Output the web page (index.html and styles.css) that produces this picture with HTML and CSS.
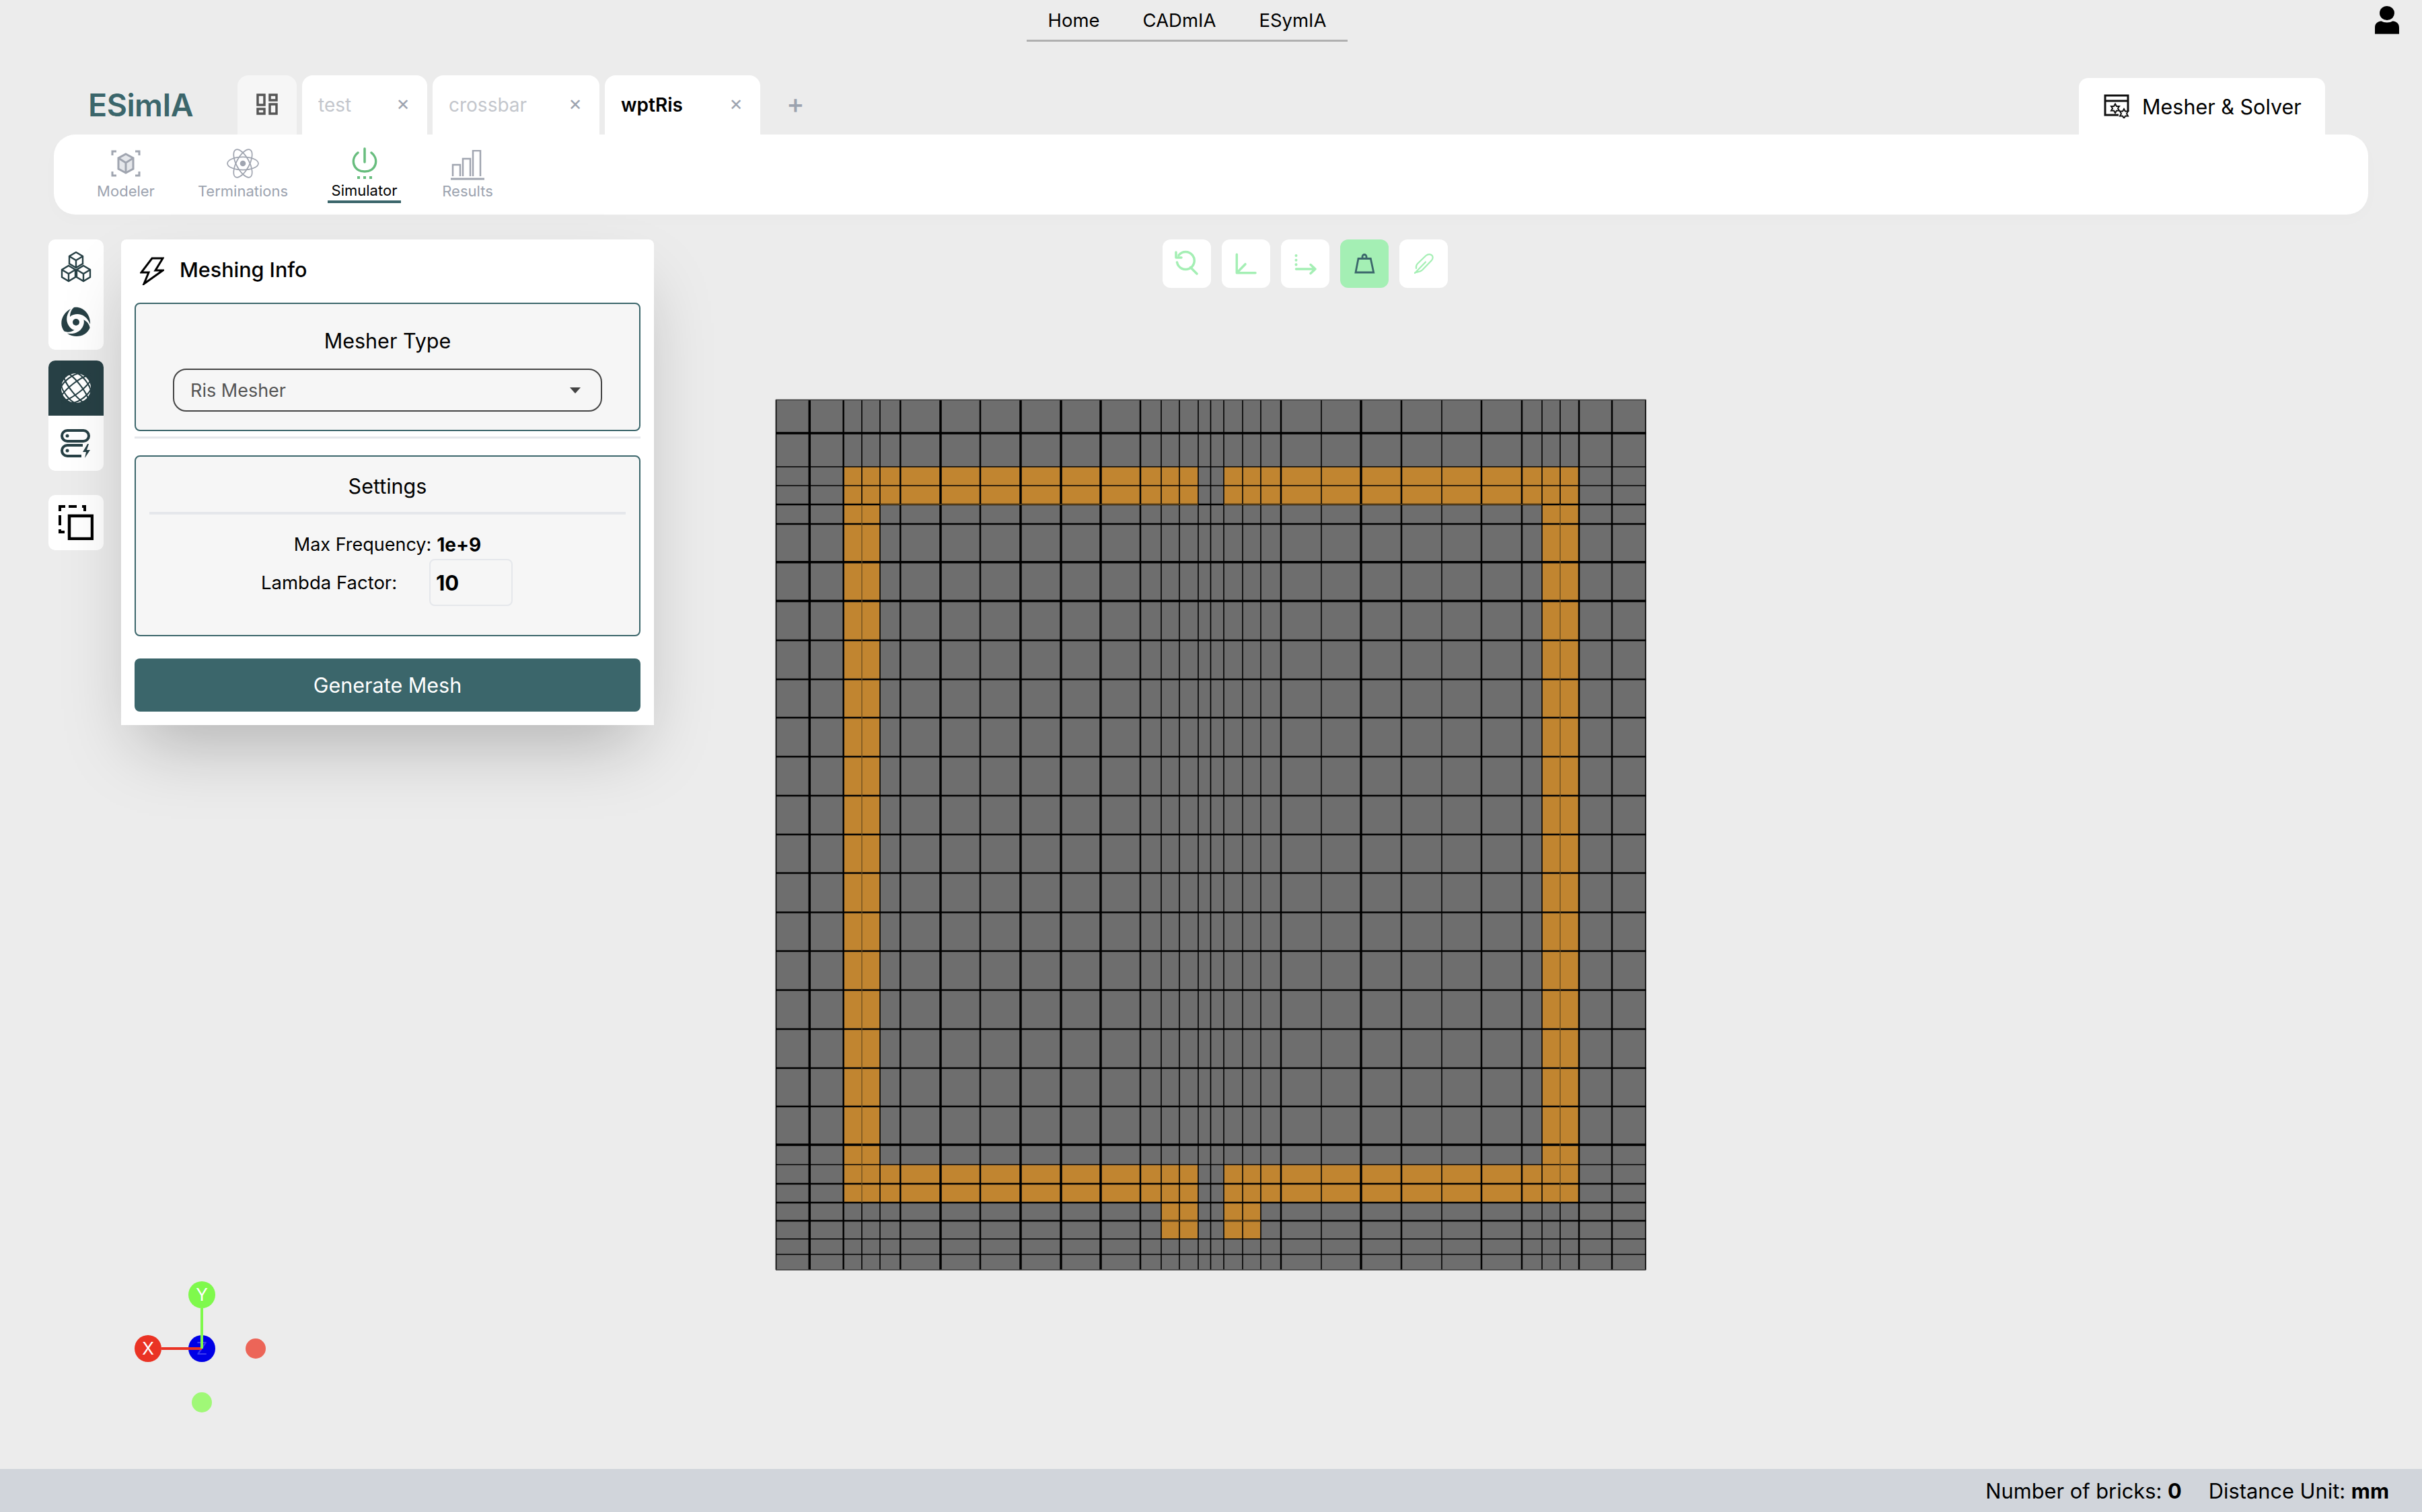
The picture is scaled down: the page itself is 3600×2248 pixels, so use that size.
FILE: index.html
```html
<!DOCTYPE html>
<html lang="en">
<head>
<meta charset="utf-8">
<title>ESimIA</title>
<link rel="stylesheet" href="styles.css">
</head>
<body>
<div class="app">
  <header class="topbar">
    <nav class="topnav">
      <a class="topnav-item">Home</a>
      <a class="topnav-item">CADmIA</a>
      <a class="topnav-item">ESymIA</a>
    </nav>
    <svg class="user-icon" viewBox="0 0 36 42"><ellipse cx="18" cy="10.5" rx="11" ry="10.5"/><path d="M0 41.5V32C0 25 5 22.500 10 22.500C13 25 23 25 26 22.500C31 22.500 36 25 36 32V41.500Z"/></svg>
  </header>

  <div class="tabrow">
    <div class="logo">ESimIA</div>
    <div class="tabs">
      <div class="tab tab-home">
        <svg class="tab-home-icon" viewBox="0 0 32 32"><path d="M2 2H12V17H2ZM20 2H30V10H20ZM2 23H12V30H2ZM20 16H30V30H20Z"/></svg>
      </div>
      <div class="tab tab-test"><span class="tab-name">test</span><span class="tab-x">✕</span></div>
      <div class="tab tab-crossbar"><span class="tab-name">crossbar</span><span class="tab-x">✕</span></div>
      <div class="tab tab-active"><span class="tab-name">wptRis</span><span class="tab-x">✕</span></div>
      <div class="tab-add">+</div>
    </div>
    <div class="solver-tab">
      <svg class="solver-icon" viewBox="0 0 38 36"><path class="solver-frame" d="M36 26V2H2V31H22M2 10H36"/><path class="solver-gear" d="M17 14.500L19 18H23L21 21L23 24.500H19L17 28L15 24.500H11L13 21L11 18H15Z"/><path class="solver-gear" d="M30 22L32 25.500H36L34 29L36 32.500H32L30 36L28 32.500H24L26 29L24 25.500H28Z"/></svg>
      <span>Mesher &amp; Solver</span>
    </div>
  </div>

  <div class="modebar">
    <div class="mode mode-modeler">
      <svg class="mode-icon" viewBox="-4 0 52 44"><path class="ic-gray" d="M2 10V4H8M42 10V4H36M2 34V40H8M42 34V40H36"/><path class="ic-gray ic-fill" d="M22 8L33 14V30L22 36L11 30V14Z"/><path class="ic-gray" d="M11 14L22 21L33 14M22 21V36"/></svg>
      <span>Modeler</span>
    </div>
    <div class="mode mode-terminations">
      <svg class="mode-icon" viewBox="0 0 52 46"><g class="ic-thin"><ellipse cx="26" cy="23" rx="24" ry="10"/><ellipse cx="26" cy="23" rx="24" ry="10" transform="rotate(62 26 23)"/><ellipse cx="26" cy="23" rx="24" ry="10" transform="rotate(118 26 23)"/></g><circle class="ic-dot" cx="26" cy="23" r="4.500"/></svg>
      <span>Terminations</span>
    </div>
    <div class="mode mode-simulator">
      <svg class="mode-icon sim-icon" viewBox="0 0 40 48"><path class="ic-green" d="M20 2V22M10 8C-2 18 3 36 20 36C37 36 42 18 30 8"/><path class="ic-green-dots" d="M9 45H13M18 45H22M27 45H31"/></svg>
      <span>Simulator</span>
    </div>
    <div class="mode mode-results">
      <svg class="mode-icon results-icon" viewBox="0 0 50 46"><path class="ic-bars" d="M3 39V22H14V39M18 39V13H29V39M33 39V1H44V39"/><path class="ic-base" d="M0 43H50"/></svg>
      <span>Results</span>
    </div>
  </div>

  <main class="workspace">
    <aside class="sidebar">
      <div class="side-group">
        <div class="side-btn">
          <svg class="side-icon" viewBox="0 0 46 46"><g class="ic-dark"><path d="M23 1L33 7V18L23 24L13 18V7ZM13 7L23 13L33 7M23 13V24"/><path d="M12 21L22 27V38L12 44L2 38V27ZM2 27L12 33L22 27M12 33V44"/><path d="M34 21L44 27V38L34 44L24 38V27ZM24 27L34 33L44 27M34 33V44"/></g></svg>
        </div>
        <div class="side-btn">
          <svg class="side-icon" viewBox="-23 -23 46 46"><circle class="ic-dark-fill" r="5"/><g class="ic-dark-fill"><path d="M-3 -22C10 -24 22 -12 21 3C17 -7 10 -12 2 -12C-2 -12 -6 -11 -9 -8C-9 -14 -7 -19 -3 -22Z"/><path d="M-3 -22C10 -24 22 -12 21 3C17 -7 10 -12 2 -12C-2 -12 -6 -11 -9 -8C-9 -14 -7 -19 -3 -22Z" transform="rotate(120)"/><path d="M-3 -22C10 -24 22 -12 21 3C17 -7 10 -12 2 -12C-2 -12 -6 -11 -9 -8C-9 -14 -7 -19 -3 -22Z" transform="rotate(240)"/></g></svg>
        </div>
      </div>
      <div class="side-group side-group-active">
        <div class="side-btn side-btn-active">
          <svg class="side-icon" viewBox="-24 -24 48 48"><circle class="globe-disc" r="23"/><g class="globe-lines"><ellipse rx="31" ry="8" transform="rotate(-38)"/><ellipse rx="31" ry="19" transform="rotate(-38)"/><ellipse rx="8" ry="31" transform="rotate(-38)"/><ellipse rx="19" ry="31" transform="rotate(-38)"/></g></svg>
        </div>
        <div class="side-btn">
          <svg class="side-icon" viewBox="0 0 46 46"><path class="ic-dark-w" d="M10 4H34A6.500 6.500 0 0 1 34 20H10A6.500 6.500 0 0 1 10 4ZM33 26H10A7 7 0 0 0 10 42H31"/><circle class="ic-dark-fill" cx="10" cy="12" r="2.500"/><circle class="ic-dark-fill" cx="10" cy="34" r="2.500"/><path class="ic-dark-fill" d="M40 24L33 36H38L36 45L44 33H39L42 24Z"/></svg>
        </div>
      </div>
      <div class="side-group side-group-last">
        <div class="side-btn">
          <svg class="copy-icon" viewBox="0 0 52 52"><path class="copy-solid" d="M16 16H50V50H16Z"/><path class="copy-dash" d="M10 2H2V9M15 2H27M35 2H39V9M2 15V30M2 36V40H9"/></svg>
        </div>
      </div>
    </aside>

    <section class="panel">
      <div class="panel-head">
        <svg class="bolt-icon" viewBox="0 0 36 42"><path d="M18 2H34L23 20H34L6 40L13 23H2Z"/></svg>
        <h2 class="panel-title">Meshing Info</h2>
      </div>
      <div class="box box-type">
        <div class="box-title">Mesher Type</div>
        <div class="select">
          <span>Ris Mesher</span>
          <span class="select-arrow"></span>
        </div>
      </div>
      <div class="panel-rule"></div>
      <div class="box box-settings">
        <div class="box-title box-title-rule">Settings</div>
        <div class="freq-row"><span>Max Frequency:</span><b>1e+9</b></div>
        <div class="lambda-row"><label for="lambda">Lambda Factor:</label><input id="lambda" class="lambda-input" value="10"></div>
      </div>
      <button class="generate">Generate Mesh</button>
    </section>

    <div class="view-tools">
      <div class="tool"><svg viewBox="0 0 72 72"><path class="tool-stroke" d="M21.500 34A13 13 0 1 0 24 23.500M20 19V27H28M41.500 41.500L51 51"/></svg></div>
      <div class="tool"><svg viewBox="0 0 72 72"><path class="tool-stroke" d="M22.300 22.300V49.700H50M22.300 49.700L35 36.700"/></svg></div>
      <div class="tool"><svg viewBox="0 0 72 72"><path class="tool-stroke" d="M22.500 44H51M44 37.500L51 44L44 50.500"/><path class="tool-dots" d="M22.500 24V24.100M22.500 30.700V30.800M22.500 37.300V37.400"/></svg></div>
      <div class="tool tool-active"><svg viewBox="0 0 72 72"><path class="tool-weight" d="M27 28.500H45.300L49.700 49H23ZM33 28V25.500A3 3 0 0 1 39 25.500V28"/></svg></div>
      <div class="tool"><svg viewBox="0 0 72 72"><path class="tool-thin" d="M23 50L39 33.500M23 49.500C27 48 31 48.500 34 45.500L48 31C50.500 28 50 24.500 47.500 23C45 21.500 42 22 39.500 24L27 36C25 38 24.500 40 25 43"/></svg></div>
    </div>

    <svg class="mesh" viewBox="1150 590 1300 1302">
      <rect class="m-gray" x="1153" y="594" width="1293.500" height="1294"/>
      <path class="m-orange" d="M1253.500 694H1781V750H1308V1732H1781V1788H1780V1842H1726V1788H1253.500ZM1819 694H2347V1788H1874V1842H1819V1788H1819V1732H2292V750H1819Z"/>
      <path class="m-line lw-1" d="M1281 594V750M1281 1788V1888M1308 594V1888M1781 594V1888M1799.500 594V1888M1819 594V1888M1964 594V1888M2319 594V750M2319 1788V1888M1726 594V1888M1753 594V1888M1847 594V1888M1874 594V1888M2143 594V1888M2292 594V1888M1153.500 594V1888M2446 594V1888"/>
      <path class="m-line lw-2" d="M1253.700 594V1888M1338.300 594V1888M1457 594V1888M1695 594V1888M2262 594V1888M2347 594V1888M2396 594V1888M1904 594V1888M2083 594V1888M2202 594V1888"/>
      <path class="m-line lw-3" d="M1203.300 594V1888M1398 594V1888M1517 594V1888M1577 594V1888M1636 594V1888M2023 594V1888"/>
      <path class="m-line lw-1" d="M1153 694H2446.500M1153 722H2446.500M1153 1865H2446.500M1153 1842H2446.500M1153 1731.500H2446.500"/>
      <path class="m-line lw-2" d="M1153 750H2446.500M1153 779H2446.500M1153 952H2446.500M1153 1010H2446.500M1153 1067H2446.500M1153 1125H2446.500M1153 1183H2446.500M1153 1240.700H2446.500M1153 1298H2446.500M1153 1356.400H2446.500M1153 1414H2446.500M1153 1472H2446.500M1153 1530H2446.500M1153 1588H2446.500M1153 1645H2446.500M1153 1788H2446.500M1153 1815H2446.500M1153 1760H2446.500"/>
      <path class="m-line lw-3" d="M1153 644H2446.500M1153 835.700H2446.500M1153 893.500H2446.500M1153 1702H2446.500"/>
      <path class="m-edge" d="M1153 594.500H2446.500M1153 1888H2446.500"/>
      <path class="m-orange-line" d="M1281 750V1732M2319 750V1732M1281 1732V1788M2319 1732V1788M1308 750H1781M1819 750H2292M1726 1815H1781M1819 1815H1874"/>
    </svg>

    <svg class="gizmo" viewBox="0 0 280 240">
      <circle class="g-z" cx="120" cy="125" r="20"/>
      <text class="g-label g-label-z" x="120" y="134" text-anchor="middle">Z</text>
      <path class="g-red" d="M60 125H120"/>
      <path class="g-green" d="M120 65V125"/>
      <circle class="g-x" cx="40" cy="125" r="20"/>
      <text class="g-label" x="40" y="134" text-anchor="middle">X</text>
      <circle class="g-y" cx="120" cy="45" r="20"/>
      <text class="g-label" x="120" y="54" text-anchor="middle">Y</text>
      <circle class="g-x-neg" cx="200" cy="125" r="15"/>
      <circle class="g-y-neg" cx="120" cy="205" r="15"/>
    </svg>
  </main>

  <footer class="statusbar">
    <span>Number of bricks: <b>0</b></span>
    <span>Distance Unit: <b>mm</b></span>
  </footer>
</div>
</body>
</html>
```
FILE: styles.css
```css
* { box-sizing: border-box; }
html, body { margin: 0; height: 100%; }
body {
  background: #ececec;
  color: #000;
  font-family: Inter, "Liberation Sans", sans-serif;
  overflow: hidden;
}
.app {
  position: relative;
  width: 3600px;
  height: 2248px;
  display: flex;
  flex-direction: column;
}

/* top nav */
.topbar {
  height: 112px;
  display: flex;
  justify-content: center;
  align-items: flex-start;
  position: relative;
  flex: none;
  padding-right: 71px;
}
.topnav {
  display: flex;
  height: 62px;
  padding: 0 32px;
  gap: 64px;
  border-bottom: 3px solid #b0b0b0;
  align-items: center;
  font-size: 27.500px;
}
.topnav-item { color: #000; }
.user-icon {
  position: absolute;
  left: 3530px;
  top: 9px;
  width: 36px;
  height: 42px;
  fill: #000;
}

/* tab row */
.tabrow {
  height: 88px;
  flex: none;
  display: flex;
  align-items: flex-end;
  padding-left: 131px;
}
.logo {
  width: 222px;
  height: 88px;
  font-size: 46.500px;
  font-weight: 600;
  line-height: 88px;
  color: #3b666b;
  letter-spacing: -0.5px;
}
.tabs { display: flex; gap: 8px; height: 88px; align-items: stretch; }
.tab {
  display: flex;
  align-items: center;
  background: #fff;
  border-radius: 16px 16px 0 0;
  font-size: 28px;
  color: #c3c6cc;
}
.tab-home { width: 88px; background: #f6f6f6; justify-content: center; padding-bottom: 2px; }
.tab-home-icon { width: 32px; height: 32px; fill: none; stroke: #555; stroke-width: 3.500; }
.tab-test { width: 186px; padding-left: 24px; }
.tab-crossbar { width: 248px; padding-left: 24px; }
.tab-active { width: 231px; padding-left: 24px; color: #000; font-weight: 600; }
.tab-name { flex: 1; }
.tab-x {
  color: #9ca3af;
  font-size: 24px;
  font-weight: 700;
  width: 46px;
  font-family: "DejaVu Sans", sans-serif;
}
.tab-add {
  color: #9ca3af;
  font-size: 40px;
  font-weight: 500;
  margin-left: 31px;
  line-height: 84px;
}
.solver-tab {
  margin-left: auto;
  margin-right: 144px;
  width: 366px;
  height: 84px;
  background: #fff;
  border-radius: 14px 14px 0 0;
  display: flex;
  align-items: center;
  gap: 19px;
  padding-left: 37px;
  font-size: 30.500px;
}
.solver-icon { width: 38px; height: 36px; flex: none; }
.solver-frame { fill: none; stroke: #111; stroke-width: 3; }
.solver-gear { fill: none; stroke: #111; stroke-width: 2; }

/* mode bar */
.modebar {
  flex: none;
  margin: 0 80px;
  height: 119px;
  background: #fff;
  border-radius: 32px;
  box-shadow: 0 8px 24px rgba(0, 0, 0, 0.015);
  display: flex;
  align-items: flex-start;
  position: relative;
}
.mode {
  position: relative;
  display: flex;
  flex-direction: column;
  align-items: center;
  font-size: 22px;
  color: #9ca3af;
  padding-top: 21px;
  height: 102px;
}
.mode span { margin-top: 6px; line-height: 26px; }
.mode-icon { height: 44px; width: 52px; }
.mode-modeler { margin-left: 64px; width: 86px; }
.mode-terminations { margin-left: 63px; width: 136px; }
.mode-simulator {
  margin-left: 58px;
  width: 109px;
  color: #000;
  border-bottom: 4px solid #3b666b;
  padding-top: 19px;
}
.mode-simulator span { margin-top: 3px; }
.mode-results { margin-left: 60px; width: 78px; padding-top: 23px; }
.sim-icon { height: 48px; width: 40px; }
.results-icon { height: 46px; width: 50px; }
.mode-results span { margin-top: 2px; }
.ic-gray { fill: none; stroke: #a0a5b0; stroke-width: 3; }
.ic-fill { fill: #e5e7eb; }
.ic-thin { fill: none; stroke: #a0a5b0; stroke-width: 1.800; }
.ic-dot { fill: #a0a5b0; }
.ic-green { fill: none; stroke: #68bd7e; stroke-width: 3.500; stroke-linecap: round; }
.ic-green-dots { fill: none; stroke: #68bd7e; stroke-width: 4; }
.ic-bars { fill: none; stroke: #a0a5b0; stroke-width: 2.500; }
.ic-base { fill: none; stroke: #a0a5b0; stroke-width: 3; }

/* workspace */
.workspace {
  flex: 1;
  position: relative;
  display: flex;
  align-items: flex-start;
  padding: 37px 0 0 72px;
}
.sidebar {
  width: 82px;
  flex: none;
  display: flex;
  flex-direction: column;
  gap: 16px;
}
.side-group {
  background: #fff;
  border-radius: 10px;
  overflow: hidden;
}
.side-group-last { margin-top: 20px; }
.side-btn {
  height: 82px;
  display: flex;
  align-items: center;
  justify-content: center;
}
.side-btn-active { background: #274045; }
.side-icon { width: 46px; height: 46px; }
.copy-icon { width: 52px; height: 52px; }
.ic-dark { fill: none; stroke: #274045; stroke-width: 2.400; }
.ic-dark-fill { fill: #274045; }
.ic-dark-w { fill: none; stroke: #274045; stroke-width: 4; }
.globe-disc { fill: #fff; }
.globe-lines { fill: none; stroke: #274045; stroke-width: 2.200; }
.copy-solid { fill: none; stroke: #000; stroke-width: 4.500; }
.copy-dash { fill: none; stroke: #000; stroke-width: 4; }

/* panel */
.panel {
  width: 792px;
  height: 722px;
  margin-left: 26px;
  flex: none;
  background: #fff;
  border-radius: 8px 8px 0 0;
  box-shadow: 0 50px 100px -24px rgba(0, 0, 0, 0.25);
  padding: 0 20px;
  position: relative;
}
.panel-head {
  height: 94px;
  display: flex;
  align-items: center;
  gap: 23px;
  padding-left: 8px;
  padding-bottom: 6px;
}
.bolt-icon { width: 36px; height: 42px; fill: none; stroke: #000; stroke-width: 3; flex: none; margin-top: 6px; }
.panel-title { margin: 0; font-size: 30.500px; font-weight: 500; }
.box {
  background: #f6f6f6;
  border: 2px solid #3b666b;
  border-radius: 8px;
  text-align: center;
}
.box-type { height: 191px; padding-top: 36px; }
.box-title { font-size: 30.500px; line-height: 38px; }
.select {
  margin: 22px 55px 0;
  height: 64px;
  border: 2.500px solid #444;
  border-radius: 20px;
  display: flex;
  align-items: center;
  justify-content: space-between;
  padding: 0 30px 0 24px;
  font-size: 27px;
  color: #555;
}
.select-arrow {
  border-left: 8px solid transparent;
  border-right: 8px solid transparent;
  border-top: 9px solid #444;
}
.panel-rule { height: 3px; margin-top: 8px; margin-bottom: 25px; background: #e5e7eb; }
.box-settings { height: 269px; padding: 25px 20px 0; }
.box-title-rule {
  height: 61px;
  border-bottom: 4px solid #e5e7eb;
}
.freq-row {
  margin-top: 27px;
  height: 36px;
  display: flex;
  justify-content: center;
  gap: 8px;
  font-size: 27px;
  line-height: 36px;
}
.freq-row b { font-weight: 700; font-size: 28px; }
.lambda-row {
  display: flex;
  justify-content: flex-start;
  align-items: center;
  height: 70px;
  margin-top: 3px;
  font-size: 27.500px;
  padding-left: 166px;
}
.lambda-row label { width: 250px; flex: none; text-align: left; }
.lambda-input {
  width: 124px;
  height: 70px;
  background: transparent;
  border: 2px solid #e5e7eb;
  border-radius: 8px;
  padding: 0 8px;
  font: 700 31px Inter, "Liberation Sans", sans-serif;
  color: #000;
}
.generate {
  display: block;
  width: 100%;
  height: 79px;
  margin-top: 33px;
  background: #3b666b;
  color: #fff;
  border: 0;
  border-radius: 8px;
  font: 400 30.500px Inter, "Liberation Sans", sans-serif;
}

/* view tools */
.view-tools {
  display: flex;
  gap: 16px;
  margin-left: 756px;
  flex: none;
}
.tool {
  width: 72px;
  height: 72px;
  background: #fff;
  border-radius: 12px;
}
.tool svg { display: block; width: 72px; height: 72px; }
.tool-active { background: #a4efb4; }
.tool-stroke { fill: none; stroke: #a4efb4; stroke-width: 3.500; stroke-linecap: round; stroke-linejoin: round; }
.tool-dots { fill: none; stroke: #a4efb4; stroke-width: 4; stroke-linecap: round; }
.tool-weight { fill: none; stroke: #3b666b; stroke-width: 2.800; }
.tool-thin { fill: none; stroke: #a4efb4; stroke-width: 2.200; stroke-linecap: round; }

/* mesh canvas */
.mesh {
  position: absolute;
  left: 1150px;
  top: 271px;
  width: 1300px;
  height: 1302px;
}
.m-gray { fill: #6e6e6e; }
.m-orange { fill: #c18530; }
.m-line { fill: none; stroke: #000; }
.lw-1 { stroke-width: 1.600; }
.lw-2 { stroke-width: 2.500; }
.lw-3 { stroke-width: 3.500; }
.m-edge { fill: none; stroke: #3a3a3a; stroke-width: 1.500; }
.m-orange-line { fill: none; stroke: #6b4e20; stroke-width: 1.300; }

/* gizmo */
.gizmo {
  position: absolute;
  left: 180px;
  top: 1561px;
  width: 280px;
  height: 240px;
}
.g-z { fill: #0000e6; }
.g-x { fill: #ea3324; }
.g-y { fill: #7ff94c; }
.g-x-neg { fill: #ec6558; }
.g-y-neg { fill: #a0f877; }
.g-red { fill: none; stroke: #ea3324; stroke-width: 4; }
.g-green { fill: none; stroke: #7ff94c; stroke-width: 4; }
.g-label { font: 400 26px Inter, "Liberation Sans", sans-serif; fill: #fff; }
.g-label-z { fill: #3a3af0; }

/* status */
.statusbar {
  flex: none;
  height: 64px;
  background: #d1d5db;
  display: flex;
  justify-content: flex-end;
  align-items: center;
  gap: 40px;
  padding-right: 49px;
  font-size: 30.800px;
}
.statusbar b { font-weight: 700; }
```
